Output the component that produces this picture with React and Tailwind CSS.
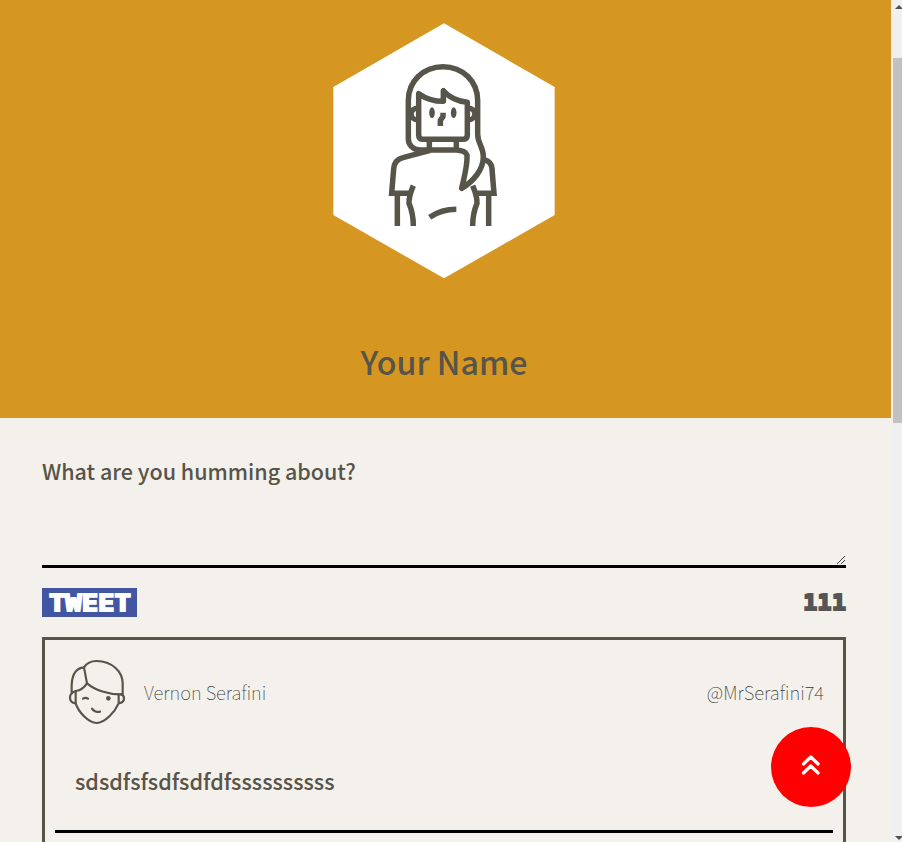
function Avatar() {
  return (
    <svg className="block h-[256px] w-[222px]" viewBox="30 24 666 768" fill="none">
      <path d="M363 25 695 216V600L363 790 31 600V216Z" fill="#fff" />
      <g stroke="#575449" strokeWidth="16.5" strokeLinejoin="round">
        <path d="M400 405H290C268 404 256 388 256 372V256C256 200 300 155 360 155S464 200 464 256V358C464 385 481 395 481 425C481 465 450 500 416 520C425 480 434 450 432 420C428 408 415 406 400 405Z" />
        <path d="M287 236V360Q287 373 300 373H420Q433 373 433 360V262C405 260 375 245 361 227V259C335 259 310 252 287 236Z" />
        <path d="M287 279C270 279 265 288 265 297S270 315 287 315M433 279C450 279 455 288 455 297S450 315 433 315" strokeWidth="15" />
        <path d="M360 293V305L352 316V333M319 373V405M400 373V405" />
        <path d="M322 406 240 428Q214 434 212 462L206 535H262M271 512Q257 545 258 565Q271 595 271 633M223 540V633" strokeLinejoin="miter" />
        <path d="M484 434Q506 440 507 462L513 535H460M449 512Q463 545 462 565Q449 595 449 633M497 540V633" strokeLinejoin="miter" />
        <path d="M320 607Q355 583 400 583" />
      </g>
      <ellipse cx="327" cy="293" rx="8.5" ry="16" fill="#575449" />
      <ellipse cx="392" cy="293" rx="8.5" ry="16" fill="#575449" />
    </svg>
  );
}

function SmallFace() {
  return (
    <svg className="block h-[66px] w-[58px]" viewBox="84 72 174 198" fill="none" stroke="#575449" strokeWidth="6.5" strokeLinecap="round" strokeLinejoin="round">
      <path d="M95 176V150Q97 100 132 97Q144 78 170 78C215 78 248 110 248 145V178C205 180 165 165 141 145Q128 165 107 168Q90 173 90 188Q90 203 107 205" />
      <path d="M132 97 141 145M107 168V205C115 230 145 264 170 264S225 230 236 205V178M243 178Q252 180 252 190Q252 204 236 205" />
      <path d="M129 191Q137 186 144 191M156 221Q165 234 180 230" />
      <circle cx="205" cy="190" r="7" fill="#575449" stroke="none" />
    </svg>
  );
}

export default function App() {
  return (
    <div className="flex h-[842px] w-[902px] overflow-hidden bg-[#f4f0eb] font-['Noto_Sans_CJK_SC',sans-serif] text-[#575449]">
      <main className="relative w-[891px] shrink-0">
        <header className="flex h-[418px] flex-col items-center bg-[#d69622] pt-[23px] pr-[3px]">
          <Avatar />
          <h1 className="mt-[58px] text-[32.2px] leading-[48px] font-medium whitespace-nowrap">Your Name</h1>
        </header>
        <section className="pr-[45px] pl-[42px]">
          <div className="flex h-[150px] items-start justify-between border-b-3 border-black pt-[37px]">
            <label className="text-[21.5px] leading-8 font-medium whitespace-nowrap">What are you humming about?</label>
            <svg className="mt-[101px] mr-px h-[8px] w-[8px] shrink-0" viewBox="0 0 8 8" stroke="#444" strokeWidth="1">
              <path d="M0 8 8 0M4 8 8 4" />
            </svg>
          </div>
          <div className="mt-5 flex h-[29px] items-center justify-between">
            <button className="flex h-[29px] w-[95px] items-center justify-center bg-[#4255a0] pt-px text-white">
              <span className="scale-x-[1.21] font-['DejaVu_Sans_Mono',monospace] text-[22.5px] leading-none font-bold [-webkit-text-stroke:1.8px_white]">TWEET</span>
            </button>
            <span className="origin-right scale-x-[1.07] font-['DejaVu_Sans_Mono',monospace] text-[21.5px] leading-none font-bold tracking-[0.5px] text-[#555] [-webkit-text-stroke:2px_#555]">111</span>
          </div>
          <article className="mt-5 h-[205px] border-3 border-b-0 border-[#575449] px-[10px]">
            <div className="flex h-[107px] items-start pt-[19px] pr-[9px] pl-[13px]">
              <SmallFace />
              <span className="mt-[19px] ml-[18px] text-[18.4px] leading-7 font-thin whitespace-nowrap text-[#38362f]">Vernon Serafini</span>
              <span className="mt-[19px] ml-auto text-[18.5px] leading-7 font-thin whitespace-nowrap text-[#38362f]">@MrSerafini74</span>
            </div>
            <p className="h-[86px] border-b-3 border-black pt-[18px] pl-5 text-[21.55px] leading-8 font-medium">sdsdfsfsdfsdfdfssssssssss</p>
          </article>
        </section>
        <button aria-label="Back to top" className="absolute top-[727px] left-[771px] flex h-20 w-20 items-center justify-center rounded-full bg-[#f00]">
          <svg className="h-[24px] w-[22px]" viewBox="0 0 22 24" fill="none" stroke="#fff" strokeWidth="3.2" strokeLinecap="round" strokeLinejoin="round">
            <path d="M3.5 9 10.8 2 18.1 9M3.5 18 10.8 11 18.1 18" />
          </svg>
        </button>
      </main>
      <aside className="flex w-[11px] flex-col bg-[#f0f0f0]">
        <svg className="mt-[5px] ml-[4px] h-1 w-[7px]" viewBox="0 0 7 4" fill="#505050"><path d="M0 4 4 0 8 4Z" /></svg>
        <div className="mt-[49px] ml-[2px] h-[365px] bg-[#c1c1c1]" />
        <svg className="mt-auto mb-[2px] ml-[4px] h-1 w-[7px]" viewBox="0 0 7 4" fill="#505050"><path d="M0 0H8L4 4Z" /></svg>
      </aside>
    </div>
  );
}
